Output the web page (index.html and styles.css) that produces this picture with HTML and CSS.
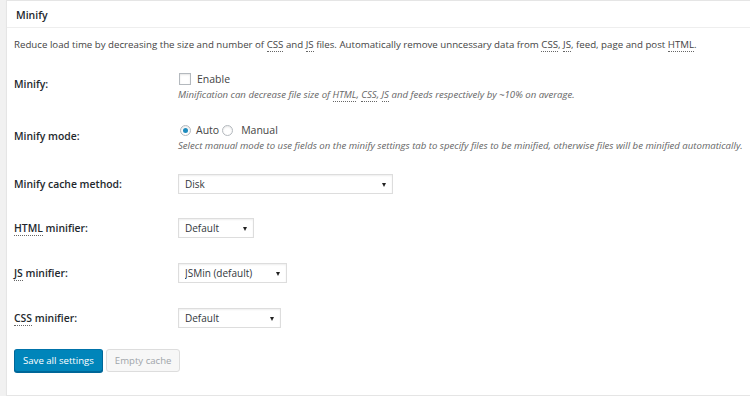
FILE: index.html
```html
<!DOCTYPE html>
<html lang="en">
<head>
  <meta charset="UTF-8">
  <meta name="viewport" content="width=device-width, initial-scale=1.0">
  <title>Minify</title>
  <link rel="stylesheet" href="styles.css">
</head>
<body>
  <div class="postbox">
    <h3 class="hndle">Minify</h3>
    <div class="inside">
      <p class="intro">Reduce load time by decreasing the size and number of <abbr>CSS</abbr> and <abbr>JS</abbr> files. Automatically remove unncessary data from <abbr>CSS</abbr>, <abbr>JS</abbr>, feed, page and post <abbr>HTML</abbr>.</p>

      <div class="form-table">
        <div class="th th-top">Minify:</div>
        <div class="td">
          <label class="check"><span class="checkbox"></span>Enable</label>
          <span class="description">Minification can decrease file size of <abbr>HTML</abbr>, <abbr>CSS</abbr>, <abbr>JS</abbr> and feeds respectively by ~10% on average.</span>
        </div>

        <div class="th th-top2">Minify mode:</div>
        <div class="td">
          <span class="radios">
            <label class="check"><span class="radio checked"></span>Auto</label>
            <label class="check"><span class="radio"></span>Manual</label>
          </span>
          <span class="description">Select manual mode to use fields on the minify settings tab to specify files to be minified, otherwise files will be minified automatically.</span>
        </div>

        <div class="th">Minify cache method:</div>
        <div class="td">
          <span class="select w-disk"><select><option>Disk</option></select></span>
        </div>

        <div class="th"><abbr>HTML</abbr> minifier:</div>
        <div class="td">
          <span class="select w-html"><select><option>Default</option></select></span>
        </div>

        <div class="th"><abbr>JS</abbr> minifier:</div>
        <div class="td">
          <span class="select w-js"><select><option>JSMin (default)</option></select></span>
        </div>

        <div class="th"><abbr>CSS</abbr> minifier:</div>
        <div class="td">
          <span class="select w-css"><select><option>Default</option></select></span>
        </div>
      </div>

      <p class="submit">
        <button class="button button-primary">Save all settings</button>
        <button class="button" disabled>Empty cache</button>
      </p>
    </div>
  </div>
</body>
</html>
```

FILE: styles.css
```css
body {
  margin: 0;
  background-color: #f1f1f1;
  font-family: "Open Sans", "Liberation Sans", sans-serif;
  font-size: 10px;
  color: #444;
}
.postbox {
  margin-left: 6px;
  background-color: #fff;
  border: 1px solid #e5e5e5;
  border-right: none;
  box-shadow: 0 1px 1px rgba(0, 0, 0, 0.04);
}
.hndle {
  margin: 0;
  height: 26px;
  line-height: 28px;
  padding: 0 9px;
  font-size: 10.5px;
  font-weight: 600;
  color: #23282d;
  border-bottom: 1px solid #eee;
}
.inside {
  padding: 0 7px 23px;
}
abbr {
  text-decoration: none;
  border-bottom: 1px dotted #666;
}
.intro {
  margin: 9px 0 0;
  line-height: 15px;
  font-size: 9.7px;
}
.form-table {
  display: grid;
  grid-template-columns: 164px 1fr;
  grid-template-rows: 50px 53px 44px 45px 45px 41px;
  margin-top: 19px;
}
.th {
  font-weight: 600;
  font-size: 10.4px;
  color: #23282d;
  line-height: 20px;
}
.th-top {
  padding-top: 3px;
}
.th-top2 {
  padding-top: 5px;
}
.td {
  display: flex;
  flex-direction: column;
  align-items: flex-start;
}
.check {
  display: inline-flex;
  align-items: center;
  line-height: 16px;
  font-size: 10.5px;
  color: #444;
}
.checkbox {
  width: 12px;
  height: 12px;
  margin: 0 6px 0 1px;
  border: 1px solid #b4b9be;
  box-sizing: border-box;
  box-shadow: inset 0 1px 2px rgba(0, 0, 0, 0.1);
}
.radios {
  display: flex;
  padding-top: 1px;
}
.radio {
  width: 11px;
  height: 11px;
  margin: 0 5px 0 2px;
  border: 1px solid #b4b9be;
  border-radius: 50%;
  box-sizing: border-box;
  box-shadow: inset 0 1px 2px rgba(0, 0, 0, 0.1);
  display: inline-flex;
  align-items: center;
  justify-content: center;
}
.radio.checked::before {
  content: "";
  width: 5px;
  height: 5px;
  border-radius: 50%;
  background-color: #1e8cbe;
}
.radios .check + .check {
  margin-left: 3px;
}
.radios .check + .check .radio {
  margin-left: 0;
  margin-right: 8px;
}
.description {
  font-style: italic;
  color: #666;
  font-size: 9.6px;
  line-height: 15px;
  white-space: nowrap;
}
.select {
  position: relative;
  display: inline-block;
}
.select select {
  -webkit-appearance: none;
  appearance: none;
  height: 20px;
  width: 100%;
  padding: 0 6px;
  border: 1px solid #ddd;
  border-radius: 0;
  box-shadow: inset 0 1px 2px rgba(0, 0, 0, 0.07);
  background-color: #fff;
  font-family: inherit;
  font-size: 10px;
  color: #32373c;
}
.select::after {
  content: "";
  position: absolute;
  right: 7px;
  top: 9px;
  border-left: 2.5px solid transparent;
  border-right: 2.5px solid transparent;
  border-top: 4px solid #222;
}
.w-disk { width: 215px; }
.w-html { width: 76px; }
.w-js { width: 109px; }
.w-css { width: 103px; }
.submit {
  margin: 0;
  display: flex;
  gap: 3px;
}
.button {
  height: 23px;
  padding: 0 8px;
  border: 1px solid #ddd;
  border-radius: 3px;
  background-color: #f7f7f7;
  color: #a0a5aa;
  font-family: inherit;
  font-size: 9.6px;
}
.button-primary {
  background-color: #0085ba;
  border-color: #0073aa #006799 #006799;
  box-shadow: 0 1px 0 #006799;
  color: #fff;
  cursor: pointer;
}
```
